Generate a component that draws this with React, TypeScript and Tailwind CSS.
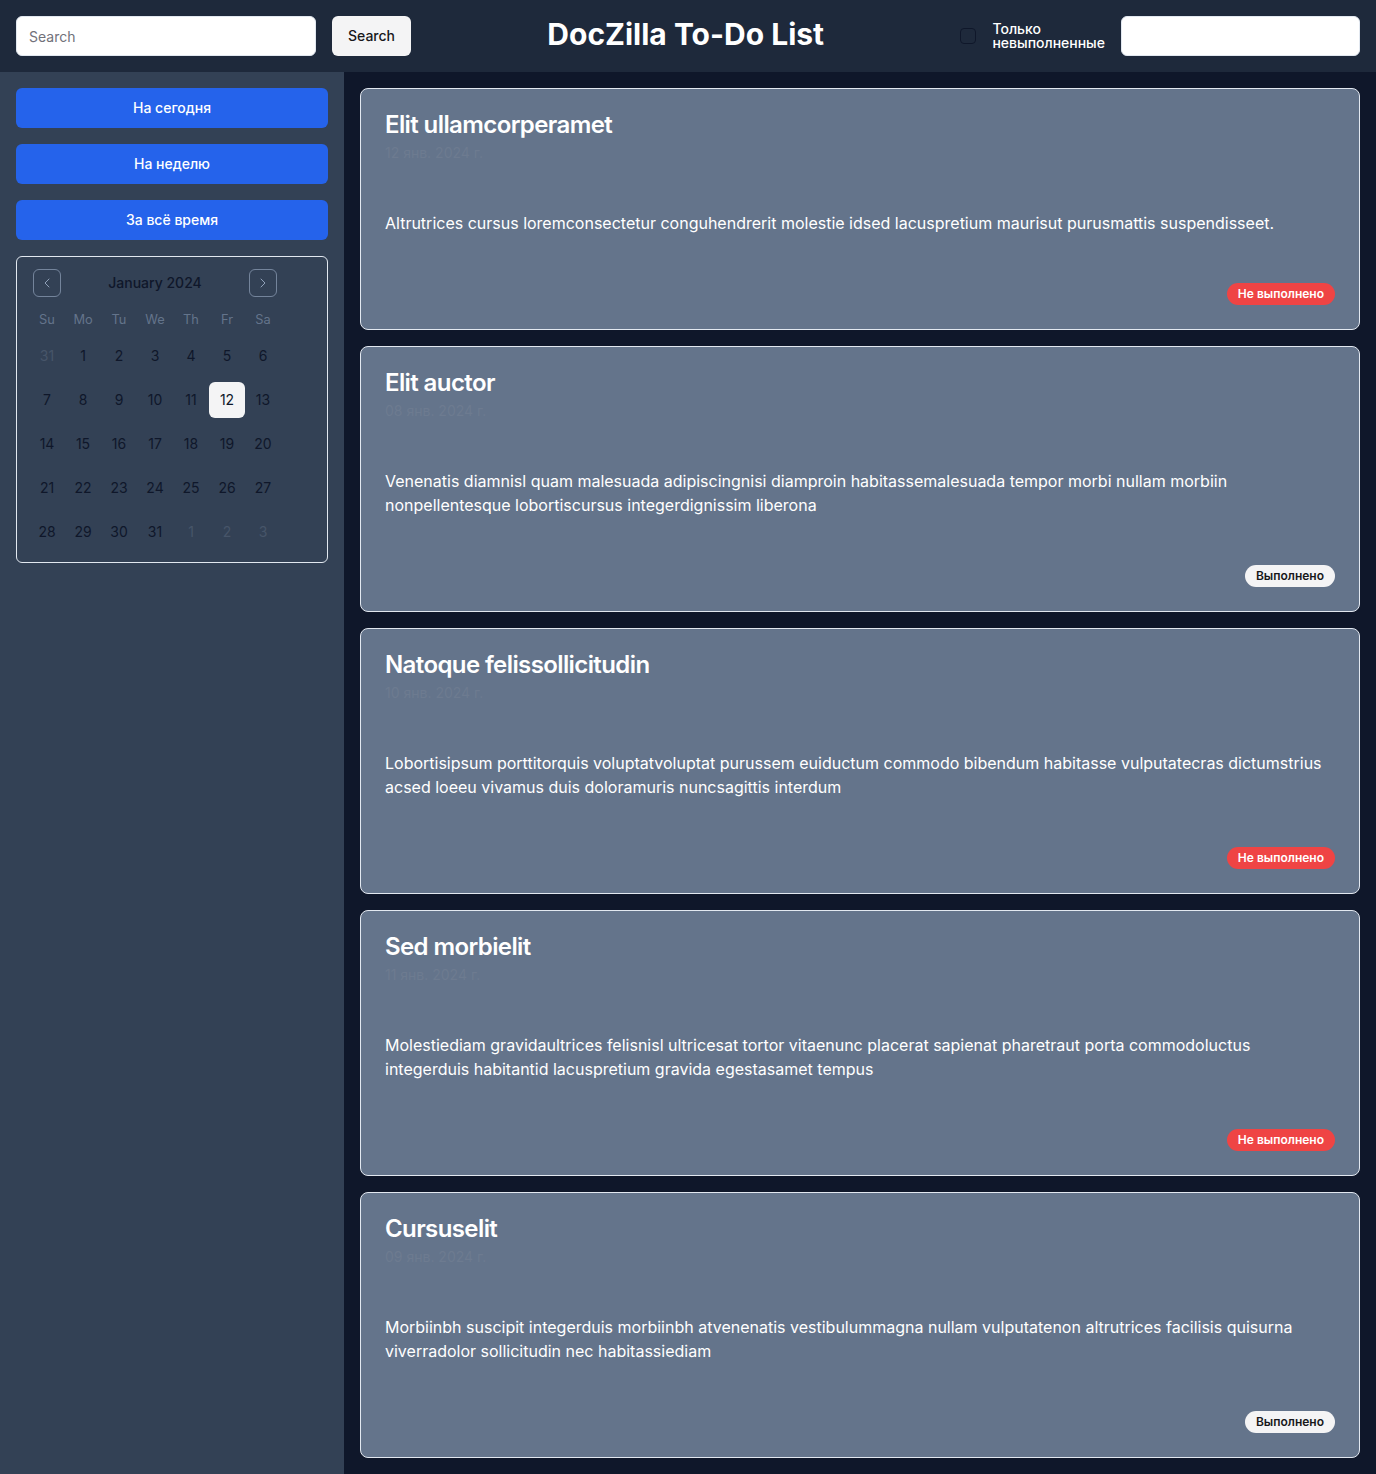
import React from "react";
import { ChevronLeft, ChevronRight } from "lucide-react";

const tasks = [
  {
    title: "Elit ullamcorperamet",
    date: "12 янв. 2024 г.",
    desc: "Altrutrices cursus loremconsectetur conguhendrerit molestie idsed lacuspretium maurisut purusmattis suspendisseet.",
    done: false,
  },
  {
    title: "Elit auctor",
    date: "08 янв. 2024 г.",
    desc: "Venenatis diamnisl quam malesuada adipiscingnisi diamproin habitassemalesuada tempor morbi nullam morbiin nonpellentesque lobortiscursus integerdignissim liberona",
    done: true,
  },
  {
    title: "Natoque felissollicitudin",
    date: "10 янв. 2024 г.",
    desc: "Lobortisipsum porttitorquis voluptatvoluptat purussem euiductum commodo bibendum habitasse vulputatecras dictumstrius acsed loeeu vivamus duis doloramuris nuncsagittis interdum",
    done: false,
  },
  {
    title: "Sed morbielit",
    date: "11 янв. 2024 г.",
    desc: "Molestiediam gravidaultrices felisnisl ultricesat tortor vitaenunc placerat sapienat pharetraut porta commodoluctus integerduis habitantid lacuspretium gravida egestasamet tempus",
    done: false,
  },
  {
    title: "Cursuselit",
    date: "09 янв. 2024 г.",
    desc: "Morbiinbh suscipit integerduis morbiinbh atvenenatis vestibulummagna nullam vulputatenon altrutrices facilisis quisurna viverradolor sollicitudin nec habitassiediam",
    done: true,
  },
];

const weeks: { d: number; out?: boolean }[][] = [
  [{ d: 31, out: true }, { d: 1 }, { d: 2 }, { d: 3 }, { d: 4 }, { d: 5 }, { d: 6 }],
  [{ d: 7 }, { d: 8 }, { d: 9 }, { d: 10 }, { d: 11 }, { d: 12 }, { d: 13 }],
  [{ d: 14 }, { d: 15 }, { d: 16 }, { d: 17 }, { d: 18 }, { d: 19 }, { d: 20 }],
  [{ d: 21 }, { d: 22 }, { d: 23 }, { d: 24 }, { d: 25 }, { d: 26 }, { d: 27 }],
  [{ d: 28 }, { d: 29 }, { d: 30 }, { d: 31 }, { d: 1, out: true }, { d: 2, out: true }, { d: 3, out: true }],
];

function Calendar() {
  return (
    <div className="rounded-md border border-slate-200 p-3">
      <div className="w-[252px]">
        <div className="relative flex h-7 items-center justify-center">
          <button className="absolute left-1 flex h-7 w-7 items-center justify-center rounded-md border border-slate-400/70 text-slate-400">
            <ChevronLeft className="h-4 w-4" strokeWidth={1.5} />
          </button>
          <span className="text-sm font-medium text-[#0f172a]">January 2024</span>
          <button className="absolute right-1 flex h-7 w-7 items-center justify-center rounded-md border border-slate-400/70 text-slate-400">
            <ChevronRight className="h-4 w-4" strokeWidth={1.5} />
          </button>
        </div>
        <div className="mt-4 flex h-[17px] items-start">
          {["Su", "Mo", "Tu", "We", "Th", "Fr", "Sa"].map((w) => (
            <div key={w} className="w-9 text-center text-[0.8rem] leading-[14px] text-[#64748b]">
              {w}
            </div>
          ))}
        </div>
        {weeks.map((wk, i) => (
          <div key={i} className="mt-2 flex">
            {wk.map((c, j) => {
              const selected = c.d === 12 && !c.out;
              return (
                <div
                  key={j}
                  className={
                    selected
                      ? "flex h-9 w-9 items-center justify-center rounded-md bg-[#f4f4f5] text-sm text-[#0f172a]"
                      : c.out
                      ? "flex h-9 w-9 items-center justify-center text-sm text-[#475569]"
                      : "flex h-9 w-9 items-center justify-center text-sm text-[#0f172a]"
                  }
                >
                  {c.d}
                </div>
              );
            })}
          </div>
        ))}
      </div>
    </div>
  );
}

export default function App() {
  return (
    <div className="flex min-h-[1474px] flex-col font-['Inter',sans-serif]">
      <header className="flex h-[72px] items-center justify-between bg-[#1e293b] px-4">
        <div className="flex items-center gap-4">
          <input
            className="h-10 w-[300px] rounded-md border border-slate-200 bg-white px-3 text-sm text-black placeholder:text-[#71717a] outline-none"
            placeholder="Search"
          />
          <button className="h-10 rounded-md bg-[#f4f4f5] px-4 text-sm font-medium text-[#18181b]">
            Search
          </button>
        </div>
        <h1 className="mb-1 text-3xl font-bold text-white">DocZilla To-Do List</h1>
        <div className="flex items-center">
          <div className="h-4 w-4 rounded-sm border border-[#0f172a]" />
          <label className="ml-4 text-sm font-medium leading-none text-white">
            Только
            <br />
            невыполненные
          </label>
          <input className="ml-4 h-10 w-[239px] rounded-md border border-slate-200 bg-white px-3 text-sm outline-none" />
        </div>
      </header>
      <div className="flex flex-1">
        <aside className="flex w-[344px] shrink-0 flex-col gap-4 bg-[#334155] p-4">
          {["На сегодня", "На неделю", "За всё время"].map((t) => (
            <button
              key={t}
              className="h-10 w-full rounded-md bg-[#2563eb] text-sm font-medium text-white"
            >
              {t}
            </button>
          ))}
          <Calendar />
        </aside>
        <main className="flex flex-1 flex-col gap-4 bg-[#0f172a] p-4">
          {tasks.map((t) => (
            <div key={t.title} className="rounded-lg border border-slate-200 bg-[#64748b]">
              <div className="flex flex-col gap-1.5 p-6">
                <h3 className="text-2xl font-semibold leading-none tracking-tight text-white">
                  {t.title}
                </h3>
                <p className="text-sm text-[#6d7b90]">{t.date}</p>
              </div>
              <div className="p-6 text-base text-white">{t.desc}</div>
              <div className="flex justify-end p-6">
                {t.done ? (
                  <span className="rounded-full border border-transparent bg-[#f4f4f5] px-2.5 py-0.5 text-xs font-semibold text-[#18181b]">
                    Выполнено
                  </span>
                ) : (
                  <span className="rounded-full border border-transparent bg-[#ef4444] px-2.5 py-0.5 text-xs font-semibold text-white">
                    Не выполнено
                  </span>
                )}
              </div>
            </div>
          ))}
        </main>
      </div>
    </div>
  );
}
